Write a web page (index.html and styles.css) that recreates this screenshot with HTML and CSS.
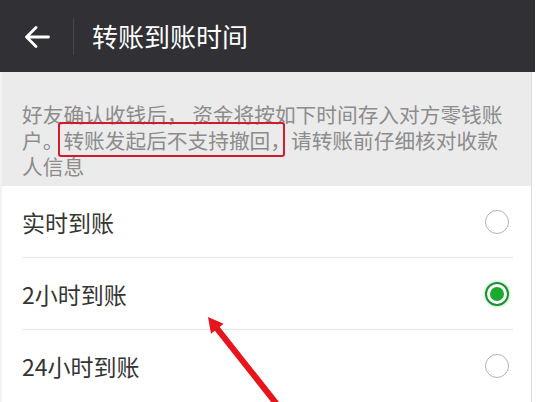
FILE: index.html
```html
<!DOCTYPE html>
<html lang="zh-CN">
<head>
<meta charset="utf-8">
<title>转账到账时间</title>
<link rel="stylesheet" href="styles.css">
</head>
<body>
<div class="page">
  <header class="topbar">
    <div class="back">
      <svg width="26" height="22" viewBox="0 0 26 22"><path d="M24.5 11H2.5M12 1.5L2.5 11L12 20.5" fill="none" stroke="#fff" stroke-width="2.8" stroke-linecap="round" stroke-linejoin="round"/></svg>
    </div>
    <div class="divider"></div>
    <h1 class="title">转账到账时间</h1>
  </header>
  <div class="content">
    <p class="notice">好友确认收钱后， 资金将按如下时间存入对方零钱账户。<span class="mark">转账发起后不支持撤回，</span>请转账前仔细核对收款人信息</p>
    <ul class="options">
      <li class="option"><span class="label">实时到账</span><span class="radio"></span></li>
      <li class="option"><span class="label">2小时到账</span><span class="radio on"></span></li>
      <li class="option"><span class="label">24小时到账</span><span class="radio"></span></li>
    </ul>
  </div>
  <svg class="pointer" width="536" height="402" viewBox="0 0 536 402">
    <polygon points="208,317 211,333.8 214.9,330.7 279,411.9 283.8,408.1 219.7,326.9 223.6,323.8" fill="#e8141c"/>
  </svg>
</div>
</body>
</html>
```
FILE: styles.css
```css
* { box-sizing: border-box; }
html, body { margin: 0; padding: 0; background: #ffffff; }
body { font-family: "Noto Sans CJK SC", "Noto Sans", sans-serif; }
.page {
  position: relative;
  width: 536px;
  height: 402px;
  overflow: hidden;
}
.topbar {
  height: 72px;
  background: #303035;
  display: flex;
  align-items: center;
  width: 535px;
}
.back {
  width: 73px;
  padding-left: 24px;
  display: flex;
  align-items: center;
  height: 100%;
}
.back svg { display: block; margin-top: 1px; }
.divider {
  width: 1px;
  height: 37px;
  background: #45454a;
}
.title {
  margin: 0 0 0 18px;
  color: #ffffff;
  font-size: 26px;
  font-weight: 400;
  line-height: 30px;
}
.content {
  width: 532px;
  border-right: 1px solid #dcdcdc;
  border-left: 2px solid #f3f3f3;
}
.notice {
  margin: 0;
  background: #ebebeb;
  color: #8c8c8c;
  font-size: 20.7px;
  line-height: 26px;
  padding: 29px 18px 7px 20px;
}
.mark {
  position: relative;
}
.mark::after {
  content: "";
  position: absolute;
  left: -5px;
  right: 6px;
  top: -3px;
  bottom: -2px;
  border: 2.5px solid #d11a2a;
  border-radius: 3px;
}
.options {
  list-style: none;
  margin: 0;
  padding: 0 0 0 20px;
  background: #ffffff;
}
.option {
  height: 72px;
  display: flex;
  align-items: center;
  justify-content: space-between;
  padding-right: 22px;
  border-bottom: 1px solid #e6e6e6;
  margin-right: 18px;
  padding-right: 4px;
}
.option:last-child { border-bottom: none; }
.label {
  font-size: 23px;
  color: #353535;
}
.radio {
  width: 24px;
  height: 24px;
  border-radius: 50%;
  border: 1.5px solid #b3b3b3;
  position: relative;
}
.radio.on {
  border: 2.5px solid #1c8f33;
  box-shadow: 0 0 2px 1px rgba(60, 200, 80, 0.35);
}
.radio.on::after {
  content: "";
  position: absolute;
  inset: 3px;
  border-radius: 50%;
  background: #1aab2e;
}
.pointer {
  position: absolute;
  left: 0;
  top: 0;
  pointer-events: none;
}
```
